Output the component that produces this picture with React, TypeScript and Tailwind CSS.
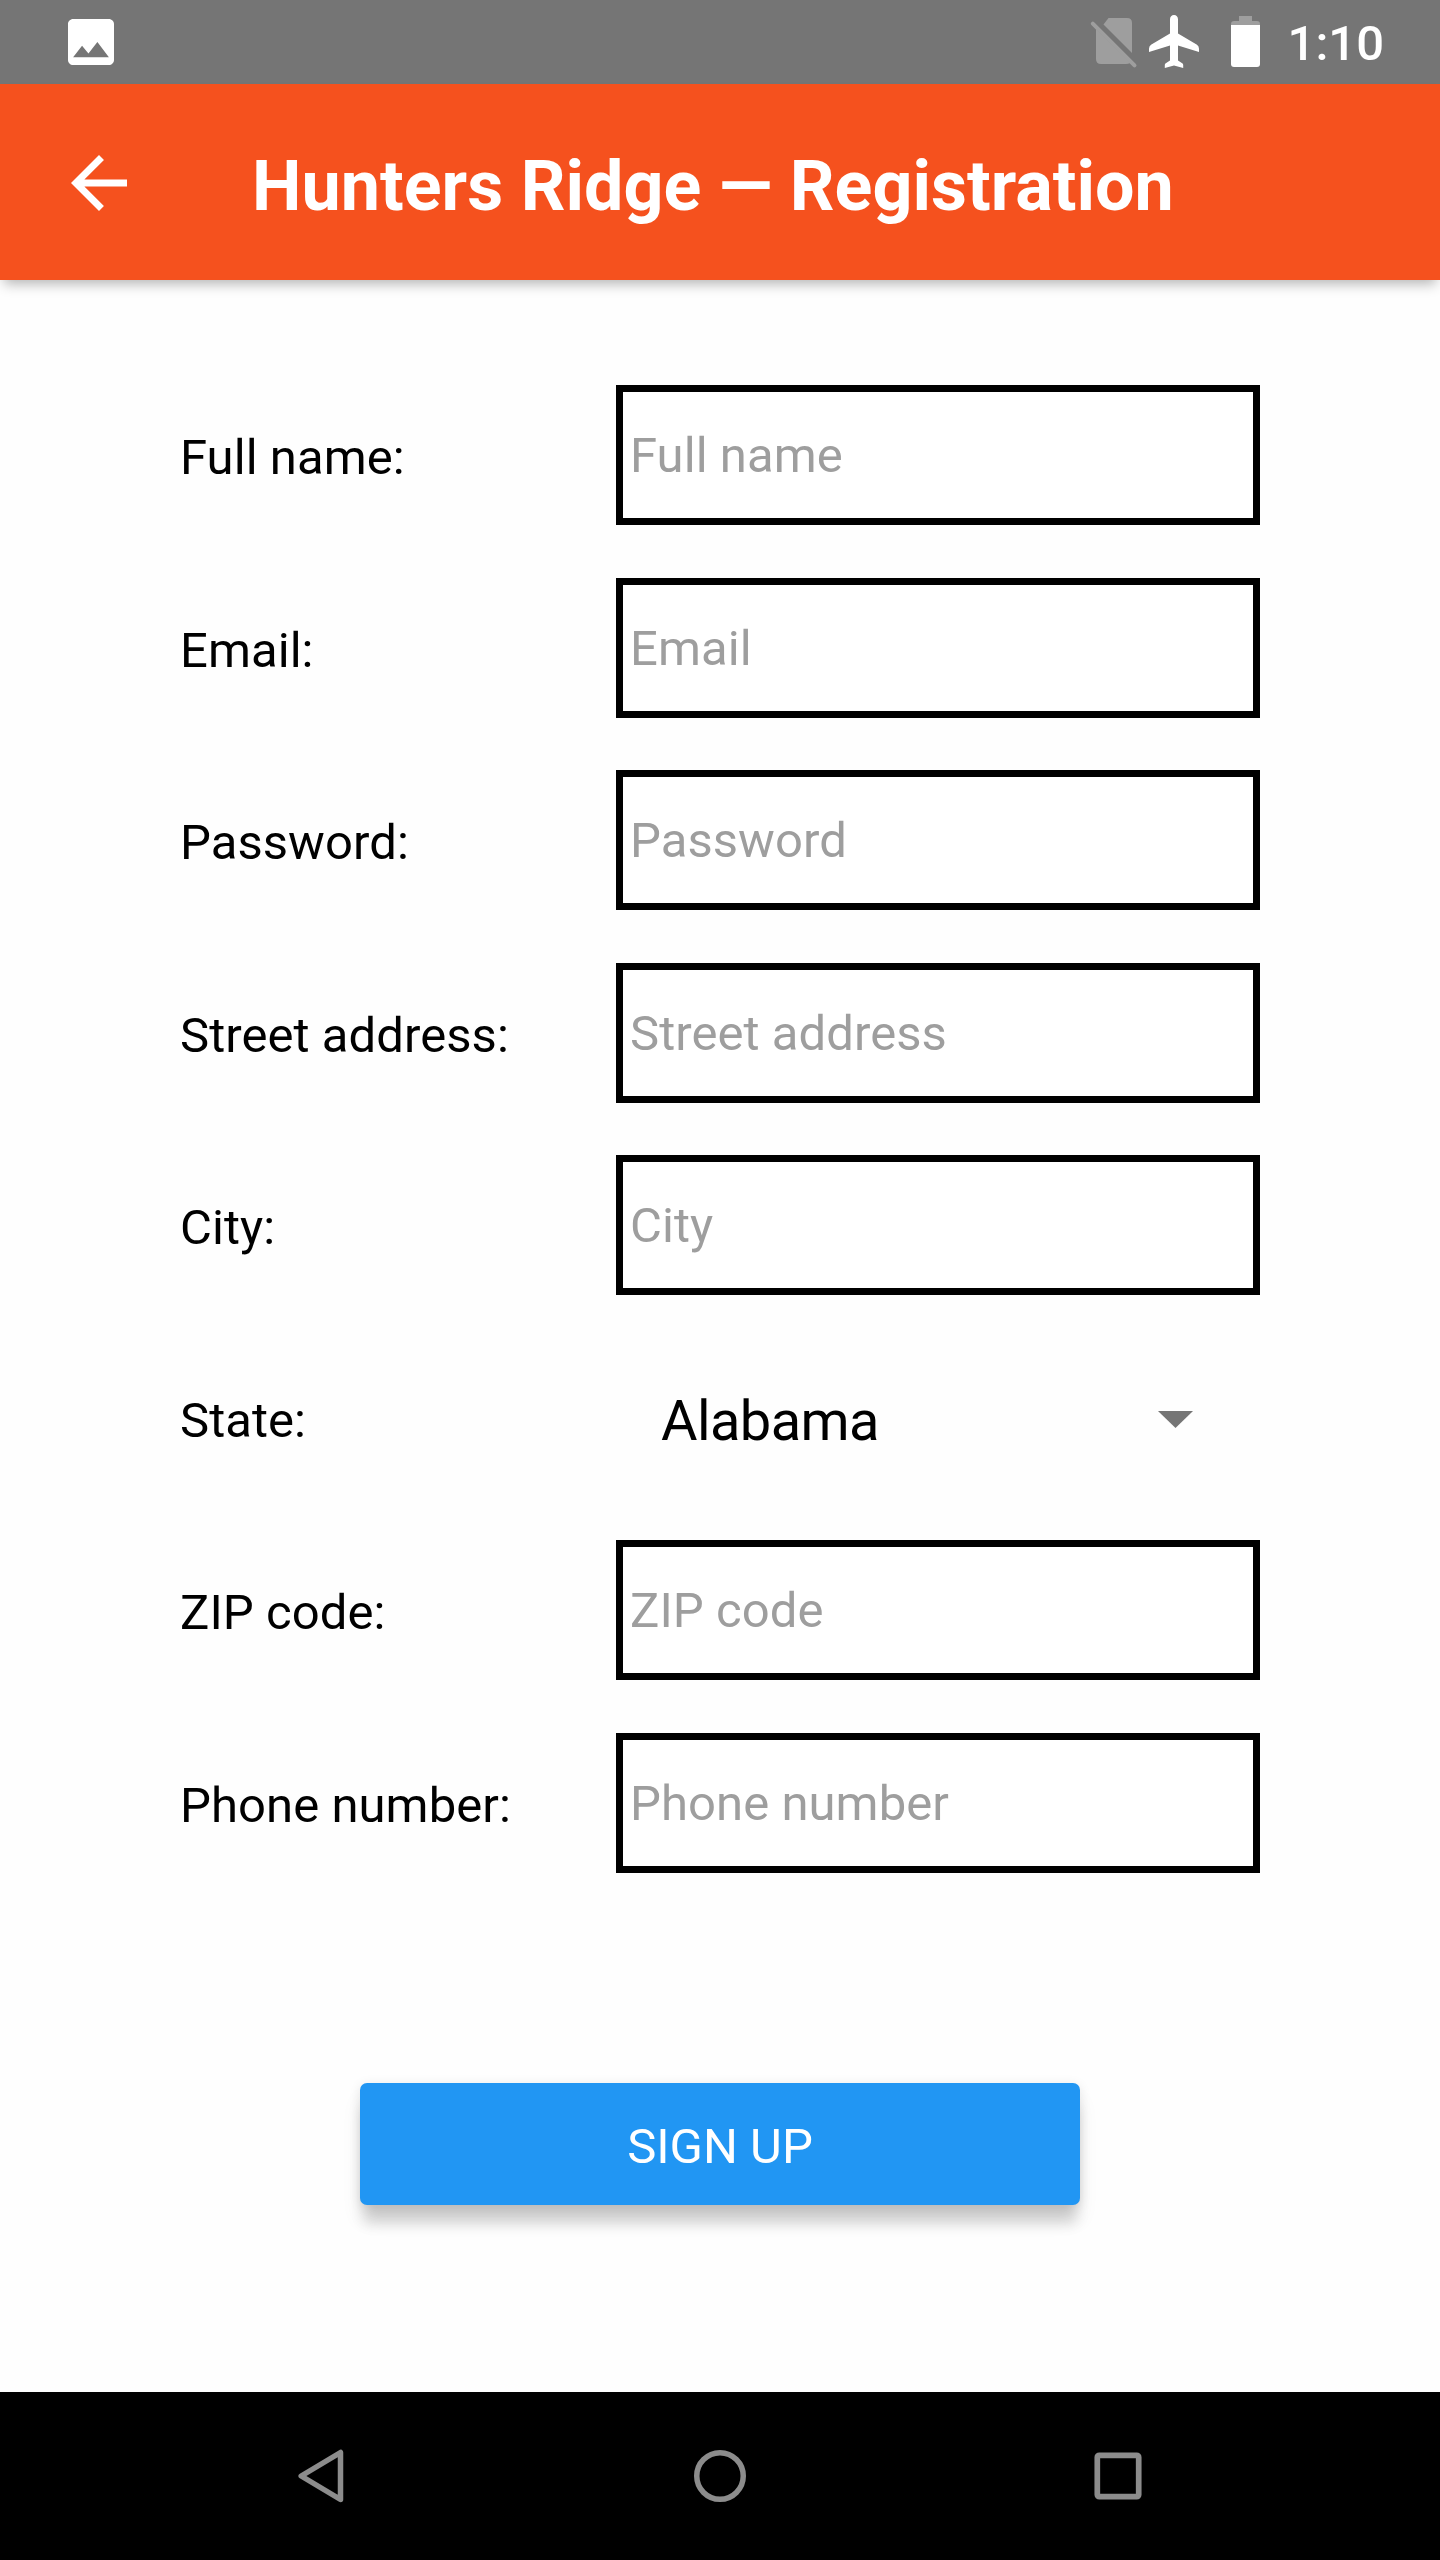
import React from "react";

type Field = { label: string; kind?: "select"; value?: string };

const fields: Field[] = [
  { label: "Full name" },
  { label: "Email" },
  { label: "Password" },
  { label: "Street address" },
  { label: "City" },
  { label: "State", kind: "select", value: "Alabama" },
  { label: "ZIP code" },
  { label: "Phone number" },
];

function StatusBar() {
  return (
    <div className="flex h-[84px] shrink-0 items-start bg-[#757575] text-white">
      <svg className="ml-[68px] mt-[19px] h-[46px] w-[46px]" viewBox="3 3 18 18" fill="currentColor">
        <path d="M21 19V5c0-1.1-.9-2-2-2H5c-1.1 0-2 .9-2 2v14c0 1.1.9 2 2 2h14c1.1 0 2-.9 2-2zM8.5 13.5l2.5 3.01L14.5 12l4.5 6H5l3.5-4.5z" />
      </svg>
      <svg className="ml-auto h-[84px] w-[180px]" viewBox="0 0 180 84">
        <g fill="#9e9e9e">
          <path d="M28.500 18H47q5 0 5 5V53L23.500 24.500Z" />
          <path d="M16 29L50 63Q48.500 64 46 64H21q-5 0-5-5Z" />
          <path d="M12.800 23.700L54.500 65.400" stroke="#9e9e9e" strokeWidth="4" strokeLinecap="round" />
        </g>
        <path
          fill="#fff"
          d="M94 15c2.400 0 4 1.700 4 4.200V33.400L117 44.700q2 1.500 2 4V52L98 45.500V60.500L102.600 63.500q.6.500.6 1.500V68L94 65.400L84.800 68V65q0-1 .6-1.500L90 60.500V45.500L69 52V48.700q0-2.500 2-4L90 33.400V19.200C90 16.700 91.600 15 94 15Z"
        />
        <path fill="#9e9e9e" d="M159 16h13v5h5q3 0 3 3v1h-29v-1q0-3 3-3h5z" />
        <path fill="#fff" d="M151 25h29v39q0 3-3 3h-23q-3 0-3-3z" />
      </svg>
      <span className="ml-[28px] mr-[56px] mt-[15px] text-[49px] font-medium leading-[57px]">1:10</span>
    </div>
  );
}

function AppBar() {
  return (
    <header className="relative flex h-[196px] shrink-0 items-center bg-[#f5511e] shadow-[0_8px_12px_-4px_rgba(0,0,0,0.29)]">
      <svg className="ml-[71px] mt-[2px] h-[56px] w-[56px]" viewBox="4 4 16 16" fill="#fff">
        <path d="M20 11H7.830l5.590-5.590L12 4l-8 8 8 8 1.410-1.410L7.830 13H20v-2z" />
      </svg>
      <h1 className="ml-[125px] mt-[8px] text-[70px] font-bold leading-[82px] tracking-[0.04px] text-white">Hunters Ridge — Registration</h1>
    </header>
  );
}

function FormRow({ field }: { field: Field }) {
  return (
    <div className="flex h-[140px] items-center odd:mb-[53px] even:mb-[52px]">
      <label className="w-[436px] pt-[4px] text-[49px] leading-[57px] tracking-[0.06px] text-black">{field.label}:</label>
      {field.kind === "select" ? (
        <div className="flex w-[644px] items-center justify-between pl-[45px] pr-[67px]">
          <span className="pt-[6px] text-[56px] leading-[66px] tracking-[-0.6px] text-black">{field.value}</span>
          <svg className="mt-[3px] h-[17px] w-[35px]" viewBox="0 0 35 17">
            <path d="M0 0H35L17.500 17Z" fill="#757575" />
          </svg>
        </div>
      ) : (
        <input
          className="h-[140px] w-[644px] rounded-none border-[7px] border-black bg-white px-[7px] text-[49px] leading-[57px] tracking-[0.06px] text-black outline-none placeholder:text-[#9e9e9e] placeholder:opacity-100"
          placeholder={field.label}
        />
      )}
    </div>
  );
}

function NavBar() {
  return (
    <nav className="flex h-[168px] shrink-0 items-center bg-black pl-[296px] pr-[297px]">
      <svg className="h-[56px] w-[50px]" viewBox="0 0 50 56" fill="none" stroke="#8c8c8c" strokeWidth="5.500" strokeLinejoin="round">
        <path d="M44.500 4.500V51.500L5.200 28Z" />
      </svg>
      <svg className="ml-[346px] h-[56px] w-[56px]" viewBox="0 0 56 56" fill="none" stroke="#8c8c8c" strokeWidth="5.500">
        <circle cx="28" cy="28" r="23.250" />
      </svg>
      <svg className="ml-auto h-[50px] w-[50px]" viewBox="0 0 50 50" fill="none" stroke="#8c8c8c" strokeWidth="5.700">
        <rect x="4.300" y="4.300" width="41.400" height="41.400" rx="2" />
      </svg>
    </nav>
  );
}

export default function App() {
  return (
    <div className="flex h-[2560px] w-[1440px] flex-col overflow-hidden bg-[#fefefe] font-['Roboto',sans-serif]">
      <StatusBar />
      <AppBar />
      <main className="flex grow flex-col">
        <form className="flex flex-col pl-[180px] pt-[105px]">
          {fields.map((field) => (
            <FormRow key={field.label} field={field} />
          ))}
        </form>
        <button className="mx-auto mt-[158px] h-[122px] w-[720px] shrink-0 rounded-[7px] bg-[#2196f3] pt-[5px] text-[49px] leading-[57px] text-white shadow-[0_22px_14px_-4px_rgba(0,0,0,0.14),0_16px_20px_rgba(0,0,0,0.07),0_2px_12px_rgba(0,0,0,0.1)]">
          SIGN UP
        </button>
      </main>
      <NavBar />
    </div>
  );
}
